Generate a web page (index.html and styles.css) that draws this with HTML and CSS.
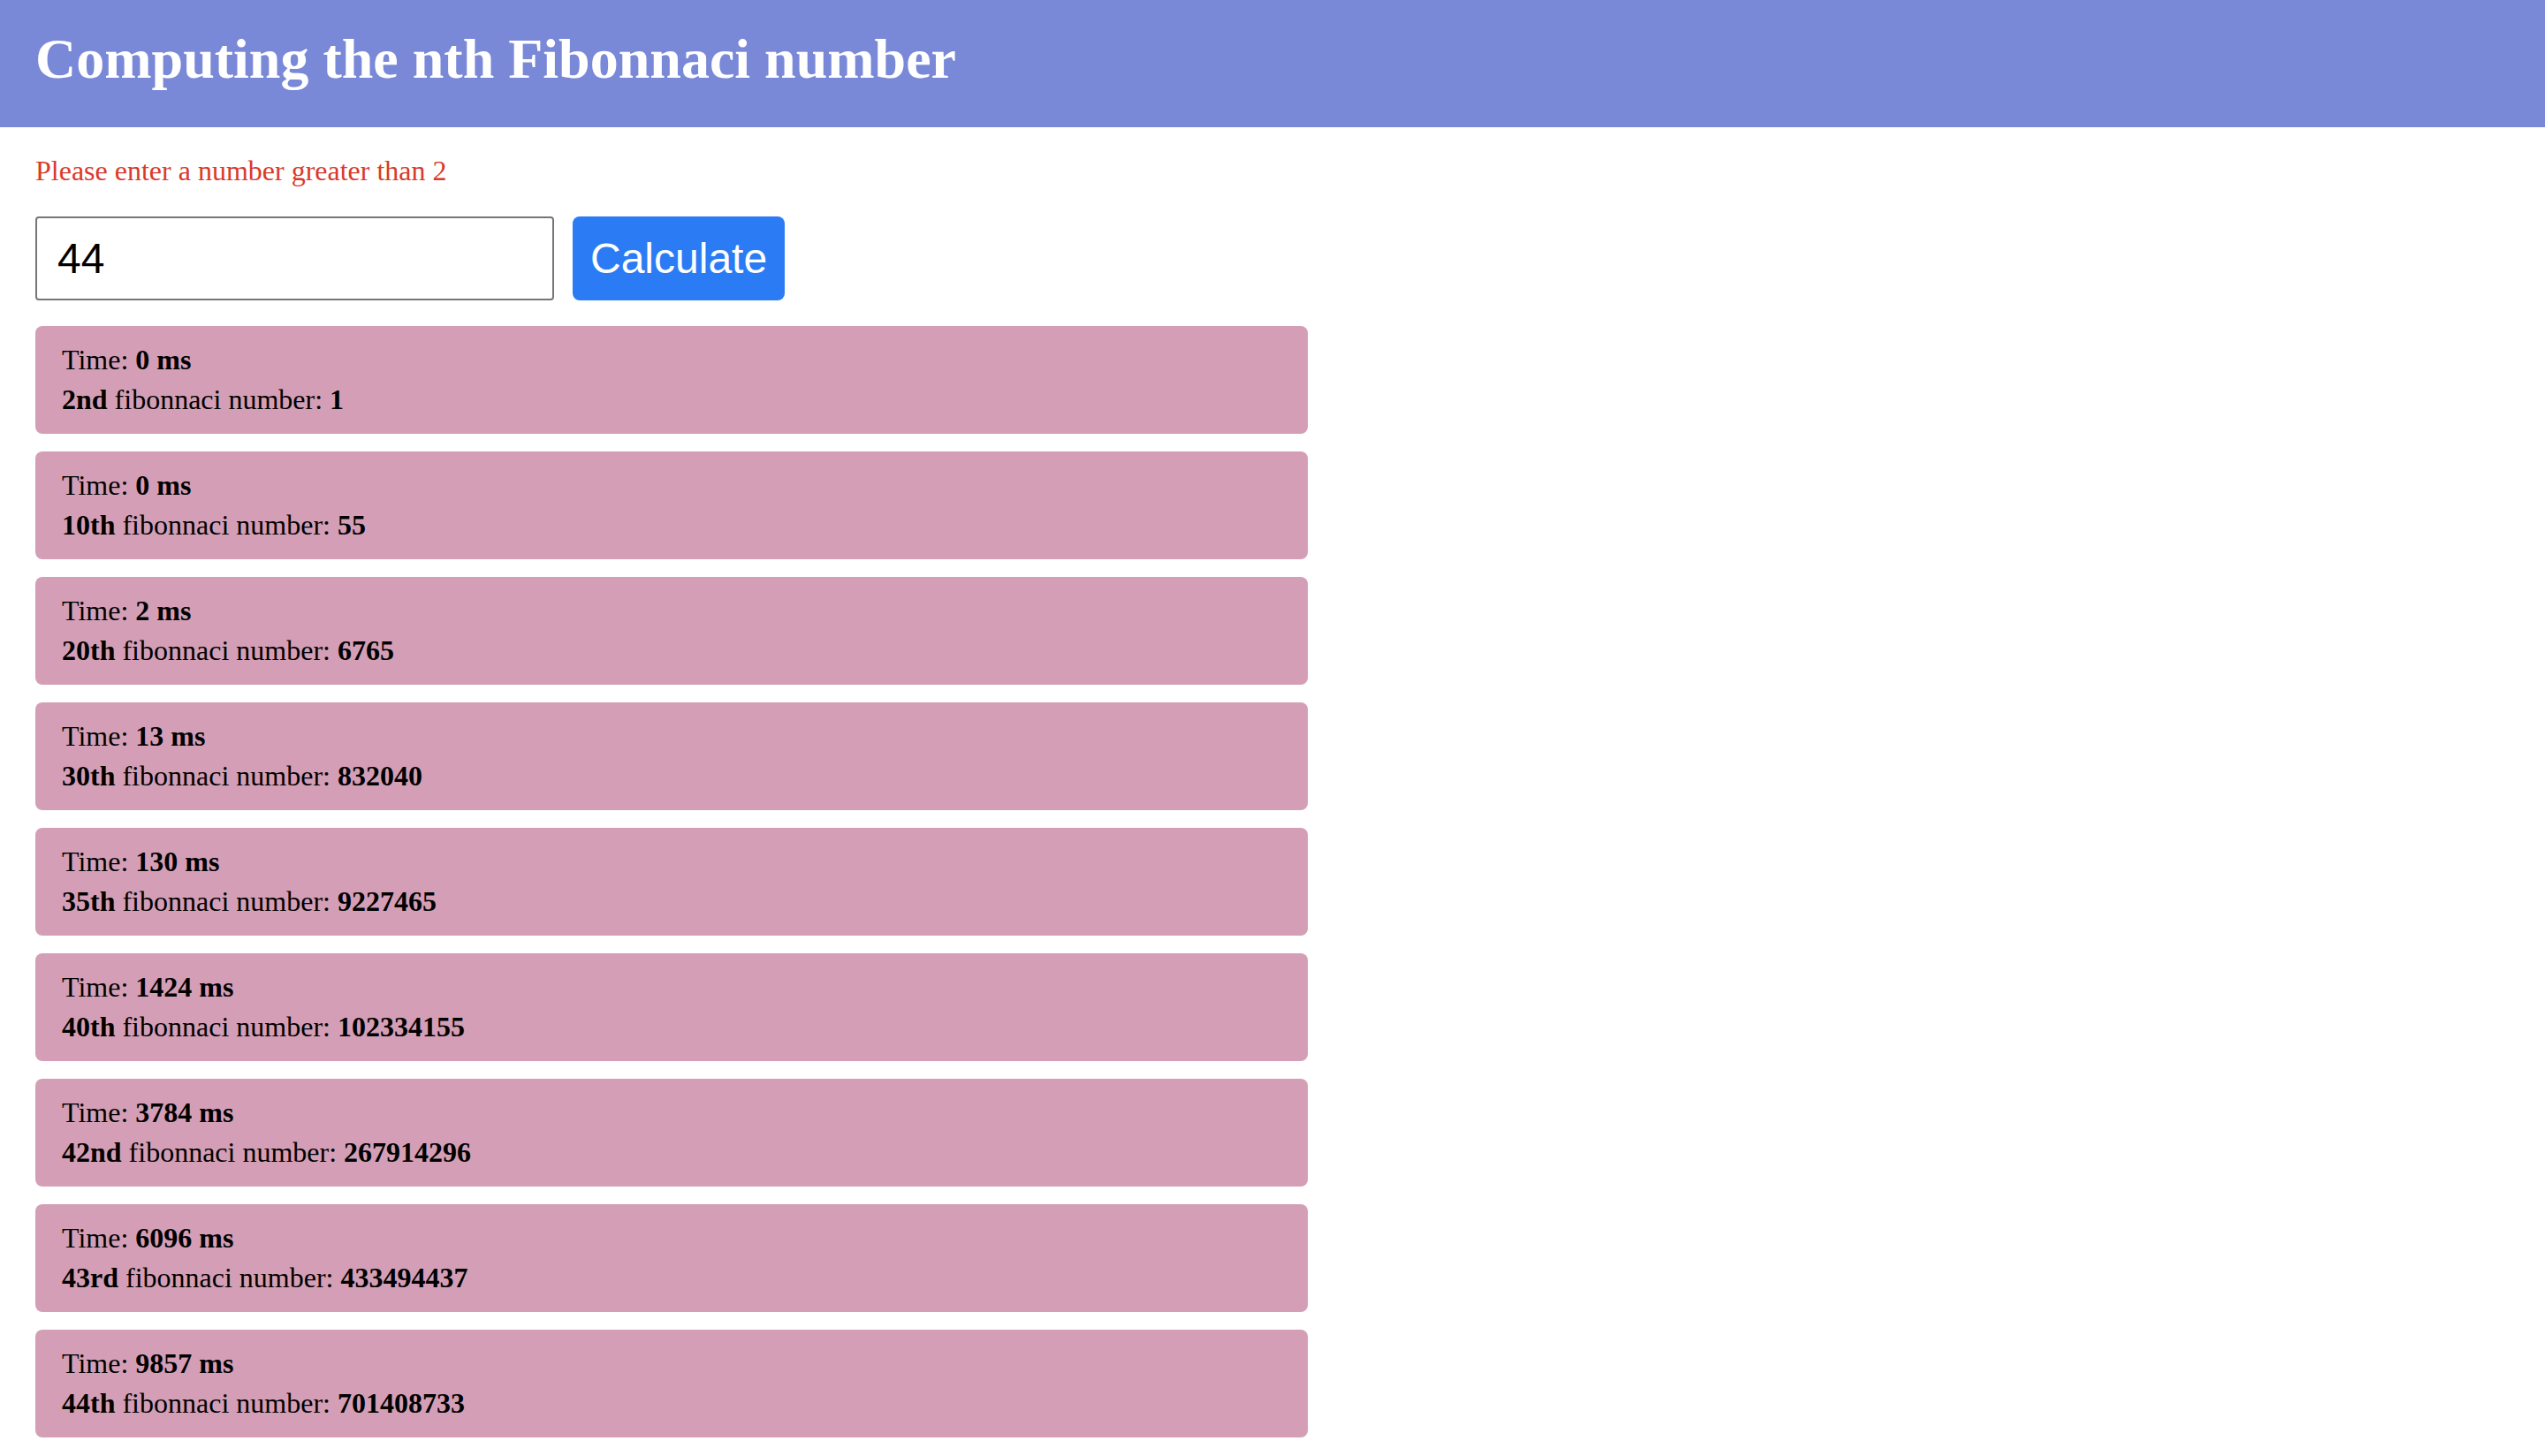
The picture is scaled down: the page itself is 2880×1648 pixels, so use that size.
FILE: index.html
```html
<!DOCTYPE html>
<html lang="en">
<head>
<meta charset="utf-8">
<title>Fibonnaci</title>
<link rel="stylesheet" href="styles.css">
</head>
<body>
<header class="topbar">
  <h1 class="title">Computing the nth Fibonnaci number</h1>
</header>
<main class="content">
  <p class="error">Please enter a number greater than 2</p>
  <form class="calc-form">
    <input class="num-input" type="text" value="44">
    <button class="calc-btn" type="button">Calculate</button>
  </form>
  <ul class="results">
    <li class="result"><div>Time: <b>0 ms</b></div><div><b>2nd</b> fibonnaci number: <b>1</b></div></li>
    <li class="result"><div>Time: <b>0 ms</b></div><div><b>10th</b> fibonnaci number: <b>55</b></div></li>
    <li class="result"><div>Time: <b>2 ms</b></div><div><b>20th</b> fibonnaci number: <b>6765</b></div></li>
    <li class="result"><div>Time: <b>13 ms</b></div><div><b>30th</b> fibonnaci number: <b>832040</b></div></li>
    <li class="result"><div>Time: <b>130 ms</b></div><div><b>35th</b> fibonnaci number: <b>9227465</b></div></li>
    <li class="result"><div>Time: <b>1424 ms</b></div><div><b>40th</b> fibonnaci number: <b>102334155</b></div></li>
    <li class="result"><div>Time: <b>3784 ms</b></div><div><b>42nd</b> fibonnaci number: <b>267914296</b></div></li>
    <li class="result"><div>Time: <b>6096 ms</b></div><div><b>43rd</b> fibonnaci number: <b>433494437</b></div></li>
    <li class="result"><div>Time: <b>9857 ms</b></div><div><b>44th</b> fibonnaci number: <b>701408733</b></div></li>
  </ul>
</main>
</body>
</html>
```

FILE: styles.css
```css
html, body {
  margin: 0;
  padding: 0;
  background: #ffffff;
  font-family: "Liberation Serif", "Times New Roman", serif;
  color: #000;
}

.topbar {
  height: 144px;
  box-sizing: border-box;
  background: #7a88d8;
  display: flex;
  align-items: center;
  padding: 0 40px 10px;
}

.title {
  margin: 0;
  color: #ffffff;
  font-size: 64px;
  font-weight: bold;
  line-height: normal;
}

.content {
  padding: 0 40px;
}

.error {
  margin: 31px 0 0;
  color: #d93a2b;
  font-size: 32px;
  line-height: normal;
}

.calc-form {
  display: flex;
  gap: 21px;
  margin-top: 33px;
}

.num-input {
  width: 587px;
  height: 95px;
  box-sizing: border-box;
  border: 2px solid #767676;
  border-radius: 4px;
  padding: 0 23px;
  font-family: "Liberation Sans", Arial, sans-serif;
  font-size: 48px;
  color: #000;
  background: #fff;
  outline: none;
}

.calc-btn {
  height: 95px;
  box-sizing: border-box;
  padding: 0 20px;
  border: none;
  border-radius: 8px;
  background: #2b7cf4;
  color: #fff;
  font-family: "Liberation Sans", Arial, sans-serif;
  font-size: 48px;
}

.results {
  list-style: none;
  margin: 29px 0 0;
  padding: 0;
  display: flex;
  flex-direction: column;
  gap: 20px;
}

.result {
  width: 1440px;
  box-sizing: border-box;
  background: #d49fb6;
  border-radius: 8px;
  padding: 16px 30px;
  font-size: 32px;
  line-height: 45px;
}
```
